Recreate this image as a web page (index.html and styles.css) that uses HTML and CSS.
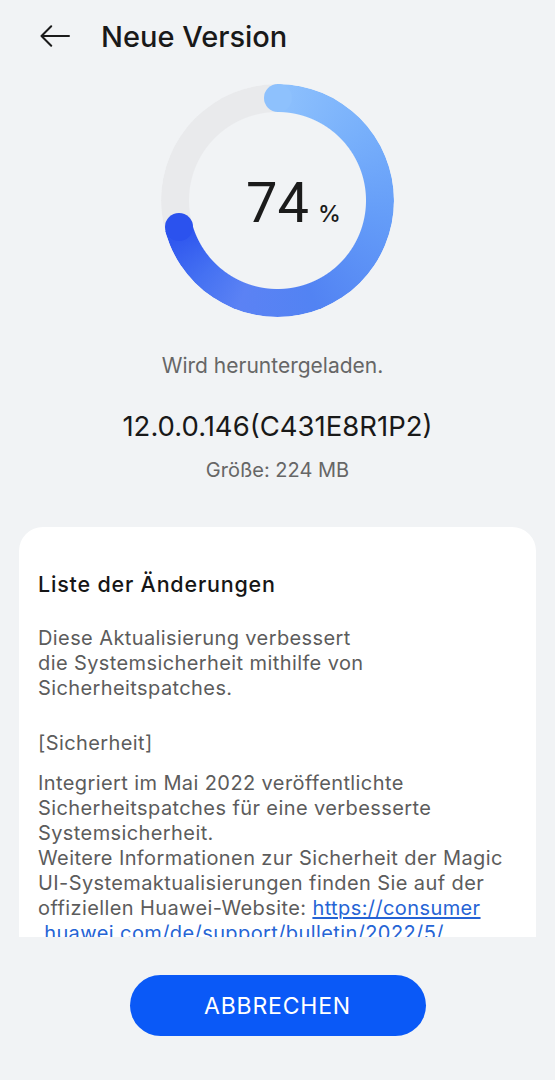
FILE: index.html
```html
<!DOCTYPE html>
<html lang="de">
<head>
<meta charset="utf-8">
<title>Neue Version</title>
<link rel="stylesheet" href="styles.css">
</head>
<body>
<div class="screen">
  <header class="header">
    <svg class="back" width="30" height="22" viewBox="0 0 30 22" aria-hidden="true">
      <path d="M29 11H1.8M11.2 1.2L1.5 11l9.7 9.8" fill="none" stroke="#1b1b1b" stroke-width="2" stroke-linecap="round" stroke-linejoin="round"/>
    </svg>
    <h1 class="title">Neue Version</h1>
  </header>

  <div class="gauge">
    <div class="gauge-ring"></div>
    <span class="cap cap-start"></span>
    <span class="cap cap-end"></span>
    <div class="gauge-value">
      <span class="num">74</span>
      <span class="pct">%</span>
    </div>
  </div>

  <p class="status">Wird heruntergeladen.</p>
  <p class="version">12.0.0.146(C431E8R1P2)</p>
  <p class="size">Größe: 224 MB</p>

  <section class="card">
    <h2 class="card-title">Liste der Änderungen</h2>
    <p class="para">Diese Aktualisierung verbessert<br>die Systemsicherheit mithilfe von<br>Sicherheitspatches.</p>
    <p class="para para-head">[Sicherheit]</p>
    <p class="para para-body">Integriert im Mai 2022 veröffentlichte<br>Sicherheitspatches für eine verbesserte<br>Systemsicherheit.<br>Weitere Informationen zur Sicherheit der Magic<br>UI-Systemaktualisierungen finden Sie auf der<br>offiziellen Huawei-Website: <a class="link" href="#">https://consumer<br>.huawei.com/de/support/bulletin/2022/5/</a></p>
  </section>

  <div class="actions">
    <button class="btn" type="button">ABBRECHEN</button>
  </div>
</div>
</body>
</html>
```
FILE: styles.css
```css
* { box-sizing: border-box; }

html, body {
  margin: 0;
  padding: 0;
  background: #f1f3f5;
}

body {
  font-family: Inter, Roboto, "Noto Sans", sans-serif;
  color: #1a1a1a;
}

.screen {
  width: 555px;
  height: 1080px;
  display: flex;
  flex-direction: column;
  align-items: center;
  overflow: hidden;
}

.header {
  width: 100%;
  height: 72px;
  display: flex;
  align-items: center;
  padding-left: 40px;
}

.back {
  flex: none;
  display: block;
}

.title {
  margin: 0 0 0 31px;
  font-size: 29px;
  line-height: 1;
  font-weight: 500;
  color: #191919;
}

.gauge {
  position: relative;
  margin-top: 12px;
  width: 233px;
  height: 233px;
  display: grid;
  place-items: center;
}

.gauge-ring {
  grid-area: 1 / 1;
  width: 100%;
  height: 100%;
  border-radius: 50%;
  background: conic-gradient(from 0deg,
    #8ec1fd 0deg,
    #78b0fb 50deg,
    #649cf8 100deg,
    #5283f3 160deg,
    #5b82f4 200deg,
    #4571f2 225deg,
    #2b52ee 255deg,
    #e9eaec 255deg,
    #e9eaec 360deg);
  -webkit-mask: radial-gradient(closest-side, transparent calc(100% - 28.5px), #000 calc(100% - 27.5px));
  mask: radial-gradient(closest-side, transparent calc(100% - 28.5px), #000 calc(100% - 27.5px));
}

.cap {
  position: absolute;
  width: 28px;
  height: 28px;
  border-radius: 50%;
}

.cap-start {
  left: 102.5px;
  top: 0;
  background: #8ec1fd;
}

.cap-end {
  left: 3.5px;
  top: 129px;
  background: #2b52ee;
}

.gauge-value {
  grid-area: 1 / 1;
  width: 100%;
  display: grid;
  grid-template-columns: 1fr auto 1fr;
  align-items: baseline;
  margin-top: 5px;
}

.num {
  grid-column: 2;
  font-family: Roboto, Inter, sans-serif;
  font-size: 56px;
  line-height: 1;
  font-weight: 400;
  color: #1b1b1b;
}

.pct {
  grid-column: 3;
  justify-self: start;
  margin-left: 9px;
  font-size: 23px;
  line-height: 1;
  font-weight: 500;
  color: #1b1b1b;
}

.status {
  margin: 34px 0 0;
  padding-right: 10px;
  font-size: 21px;
  line-height: 30px;
  color: #666;
}

.version {
  margin: 27px 0 0;
  font-size: 27.5px;
  line-height: 36px;
  font-weight: 400;
  color: #191919;
}

.size {
  margin: 13px 0 0;
  font-size: 20px;
  line-height: 26px;
  color: #666;
}

.card {
  margin-top: 44px;
  width: 517px;
  height: 410px;
  flex: none;
  background: #fff;
  border-radius: 24px 24px 0 0;
  padding: 42px 19px 0;
  overflow: hidden;
}

.card-title {
  margin: 0;
  font-size: 21.5px;
  line-height: 30px;
  font-weight: 500;
  letter-spacing: 0.8px;
  color: #161616;
}

.para {
  margin: 27px 0 0;
  font-size: 20px;
  line-height: 25px;
  letter-spacing: 0.4px;
  color: #5c5c5c;
}

.para-head {
  margin-top: 30px;
}

.para-body {
  margin-top: 15px;
}

.link {
  color: #2664d5;
  text-decoration: underline;
  text-underline-offset: 2px;
}

.actions {
  margin-top: 38px;
  width: 100%;
  display: flex;
  justify-content: center;
}

.btn {
  width: 296px;
  height: 61px;
  border: 0;
  border-radius: 31px;
  background: #0a59f7;
  color: #fff;
  font-family: Inter, Roboto, sans-serif;
  font-size: 23px;
  font-weight: 400;
  letter-spacing: 0.8px;
  padding: 0;
}
```
